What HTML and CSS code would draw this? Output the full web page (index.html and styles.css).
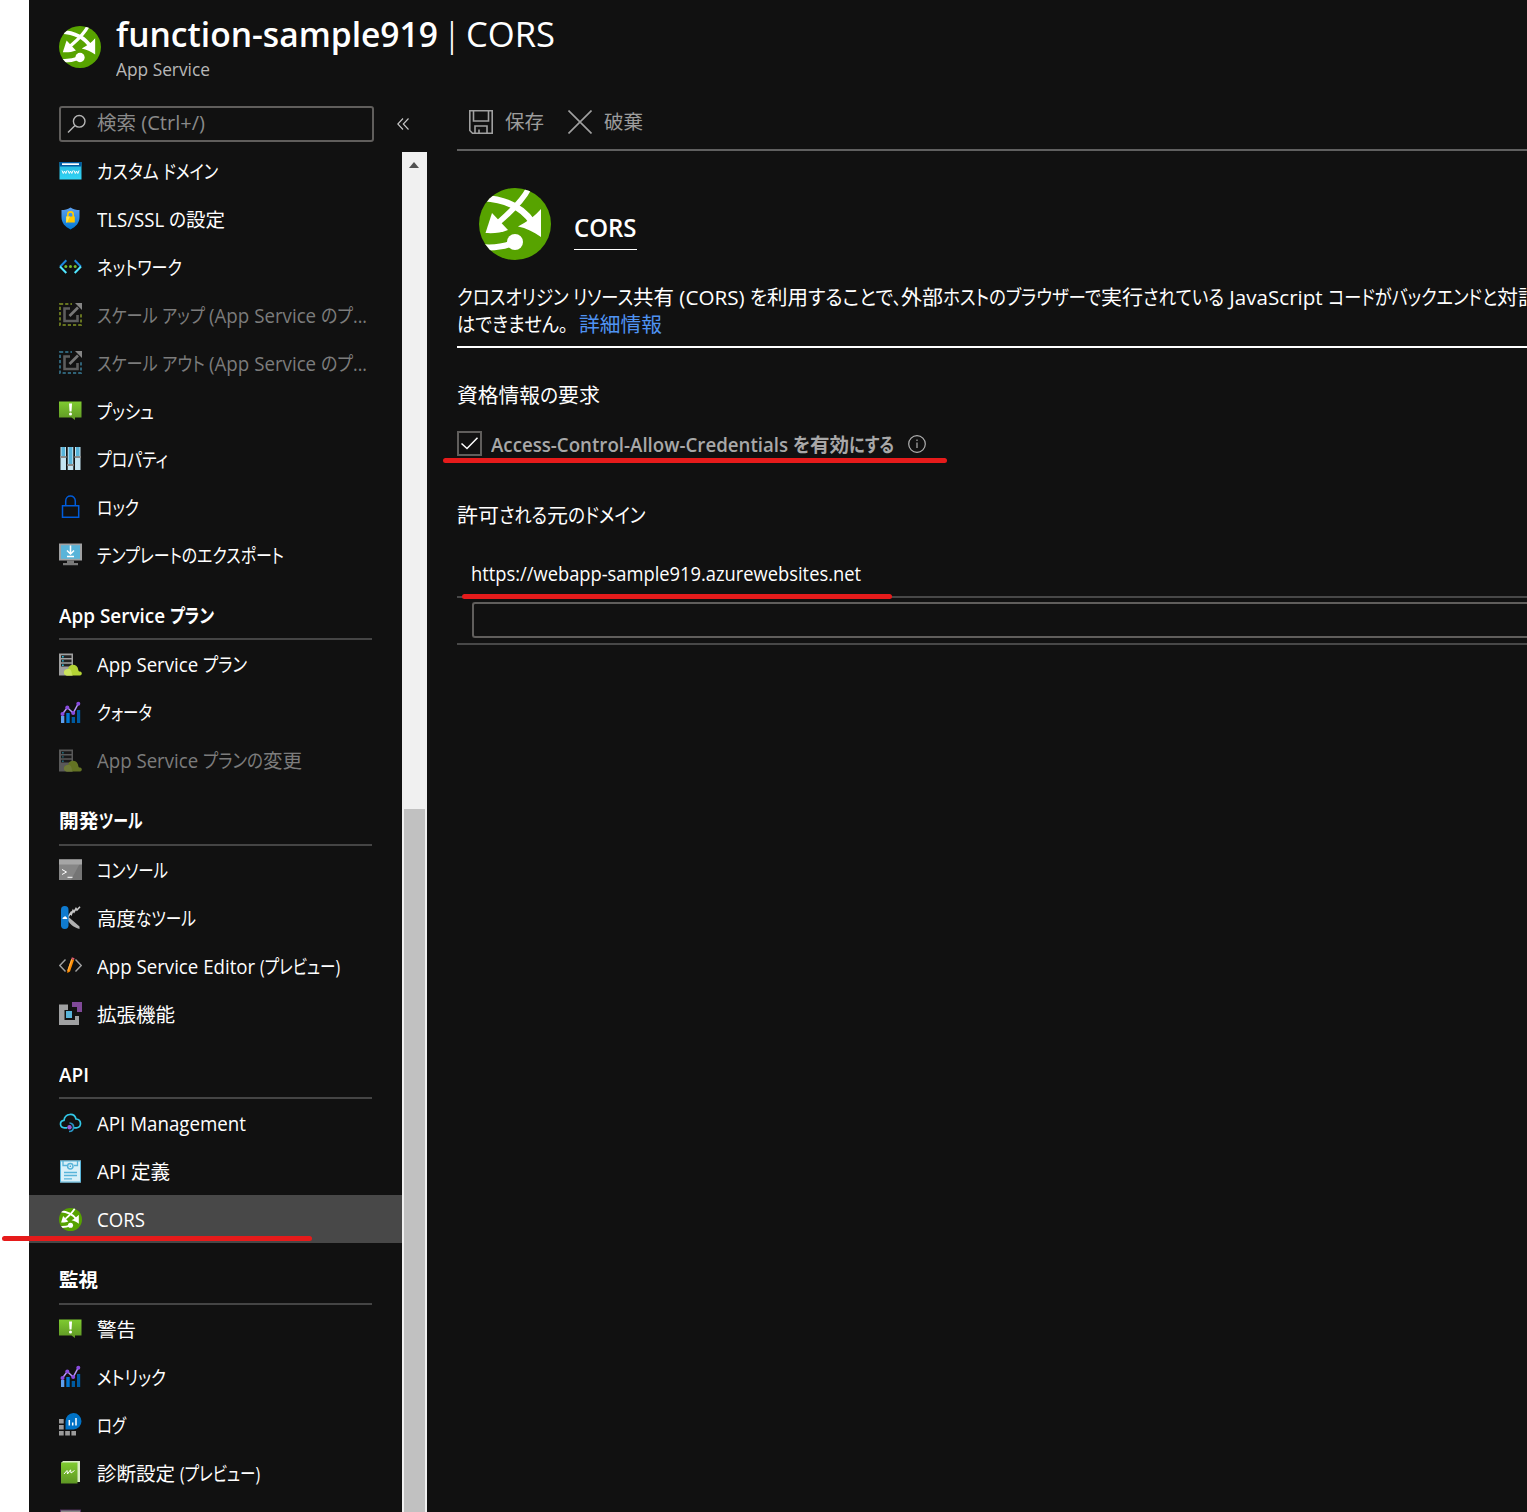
FILE: index.html
```
<!DOCTYPE html>
<html lang="ja">
<head>
<meta charset="utf-8">
<title>function-sample919 | CORS</title>
<link rel="stylesheet" href="styles.css">
</head>
<body>
<svg class="defs" width="0" height="0">
  <defs>
    <linearGradient id="g-green" x1="0" y1="0" x2="0" y2="1"><stop offset="0" stop-color="#7fcb30"/><stop offset="1" stop-color="#5e9624"/></linearGradient>
    <linearGradient id="g-shield" x1="0" y1="0" x2="0" y2="1"><stop offset="0" stop-color="#5ea0ef"/><stop offset="1" stop-color="#0078d4"/></linearGradient>
    <linearGradient id="g-cyan" x1="0" y1="0" x2="0" y2="1"><stop offset="0" stop-color="#26b5dc"/><stop offset="1" stop-color="#32d4f5"/></linearGradient>
    <clipPath id="c-round"><circle cx="36" cy="36" r="36"/></clipPath>
  </defs>
  <symbol id="i-cors" viewBox="0 0 72 72">
    <circle cx="36" cy="36" r="36" fill="#57a300"/>
    <g clip-path="url(#c-round)" fill="none" stroke="#fff">
      <path d="M50 0C44 12 34 22 20 34" stroke-width="5.5"/>
      <path d="M4 10C24 11 42 17 54 35" stroke-width="6.5"/>
      <path d="M2 59C12 60 24 59 34 55" stroke-width="6"/>
      <path d="M13 25L6.500 45C14 45.500 22 45 29 42Z" fill="#fff" stroke="none"/>
      <path d="M62 21L62 49C55 44 47 40 39 38.500C48 34 56 28 62 21Z" fill="#fff" stroke="none"/>
      <circle cx="36" cy="54" r="8" fill="#fff" stroke="none"/>
    </g>
  </symbol>
  <symbol id="i-alert" viewBox="0 0 23 23">
    <path d="M0 2.500H22.500V18.500H16V21L12.500 18.500H0Z" fill="url(#g-green)"/>
    <path d="M10 4.500H13L12.500 12.500H10.500Z" fill="#fff"/><circle cx="11.500" cy="15" r="1.500" fill="#fff"/>
  </symbol>
  <symbol id="i-chart" viewBox="0 0 23 23">
    <path d="M2 15H5.300V22H2Z" fill="#5ea0ef"/><path d="M7.300 12H10.700V22H7.300Z" fill="#0078d4"/><path d="M12.700 16H16V22H12.700Z" fill="#005ba1"/><path d="M18 9H21.200V22H18Z" fill="#005ba1"/>
    <path d="M3.500 13L8.300 6.500L14.200 12L19.300 2.700" fill="none" stroke="#b796f9" stroke-width="1.500"/>
    <g fill="#8a4be0"><circle cx="3.500" cy="13" r="2"/><circle cx="8.300" cy="6.500" r="2"/><circle cx="14.200" cy="12" r="2"/><circle cx="19.300" cy="2.700" r="2"/></g>
  </symbol>
  <symbol id="i-plan" viewBox="0 0 23 23">
    <path d="M0 0.500H14V22.500H0Z" fill="#a0a0a0"/>
    <path d="M2 2.300H12.500V5H2ZM2 6.500H12.500V9.200H2ZM2 10.800H12.500V13.500H2Z" fill="#222"/>
    <path d="M3 3H4.700V4.400H3ZM3 7.200H4.700V8.600H3ZM3 11.500H4.700V12.900H3Z" fill="#32bedd"/>
    <path d="M8 22.500C3.500 22 4 16 9 16C10 10.500 18.500 10 19.300 17C19.600 18.500 20 18.500 21 18.500C23.500 18.700 23.300 22.500 21 22.500Z" fill="#b4d335"/>
    <path d="M8 22.500C3.500 22 4 16 9 16C11 15.500 13 17 13 22.500Z" fill="#cbe35e"/>
  </symbol>
  <symbol id="i-scale" viewBox="0 0 23 23">
    <path d="M1 1H22V22H1Z" fill="none" stroke="currentColor" stroke-width="2" stroke-dasharray="3.200 2"/>
    <path d="M13 0H23V10H13Z" fill="#111"/>
    <path d="M11 5.500H5.500V18H18.500V12" fill="none" stroke="#5d5d5d" stroke-width="2.600"/>
    <path d="M10.500 13L19 4.500" stroke="#777" stroke-width="2.600"/><path d="M16 0H23V7Z" fill="#858585"/>
  </symbol>
</svg>

<div class="blade">
  <header class="head">
    <svg class="logo"><use href="#i-cors"/></svg>
    <div class="titles">
      <h1><b data-w="322">function-sample919</b><span data-w="28"> | </span><span data-w="89">CORS</span></h1>
      <p><span data-w="94">App Service</span></p>
    </div>
  </header>

  <div class="columns">
    <nav class="side">
      <div class="searchrow">
        <div class="search">
          <svg width="20" height="20" viewBox="0 0 20 20" fill="none" stroke="#b5b5b5" stroke-width="1.400"><circle cx="12.200" cy="7.300" r="5.800"/><path d="M8 11.500L1 18.500"/></svg>
          <span class="line"><span data-w="39">検索</span><span data-w="69"> (Ctrl+/)</span></span>
        </div>
        <svg class="fold" width="12" height="12" viewBox="0 0 12 12" fill="none" stroke="#c8c8c8" stroke-width="1.100"><path d="M6 .5L.8 6L6 11.500M11.500 .5L6.300 6L11.500 11.500"/></svg>
      </div>
      <div class="scroller">
        <div class="menu">
          <div class="item"><svg viewBox="0 0 23 23"><path d="M.5 3H22.500V20.500H.5Z" fill="url(#g-cyan)"/><path d="M.5 3H22.500V7.500H.5Z" fill="#005ba1"/><path d="M3 4.300H20V6H3Z" fill="#fff"/><path d="M3 11.500L4.300 14.500L5.500 12L6.800 14.500L8 11.500M9 11.500L10.300 14.500L11.500 12L12.800 14.500L14 11.500M15 11.500L16.300 14.500L17.500 12L18.800 14.500L20 11.500" fill="none" stroke="#fff" stroke-width="1"/></svg><span class="line"><span data-w="66">カスタム </span><span data-w="55">ドメイン</span></span></div>
          <div class="item"><svg viewBox="0 0 23 23"><path d="M11.500 .5C14.500 2.500 17.500 3 20.500 3V10C20.500 16 17 19.500 11.500 22.500C6 19.500 2.500 16 2.500 10V3C5.500 3 8.500 2.500 11.500 .5Z" fill="url(#g-shield)"/><path d="M8.800 10V7.500C8.800 4 14.200 4 14.200 7.500V10" fill="none" stroke="#ffca00" stroke-width="1.600"/><path d="M7.200 9.500H15.800V15.500H7.200Z" fill="#ffca00"/><path d="M7.200 9.500H11L8 15.500H7.200Z" fill="#ffe452"/></svg><span class="line"><span data-w="72">TLS/SSL </span><span data-w="17">の</span><span data-w="39">設定</span></span></div>
          <div class="item"><svg viewBox="0 0 23 23" fill="none" stroke-width="2"><path d="M7.300 5.200L1 11.700M15.700 5.200L22 11.700" stroke="#1b86de"/><path d="M1 11.500L7.300 18M22 11.500L15.700 18" stroke="#50e6ff"/><g fill="#76bc2d" stroke="none"><circle cx="6.800" cy="11.500" r="1.500"/><circle cx="11.500" cy="11.500" r="1.500"/><circle cx="16.200" cy="11.500" r="1.500"/></g></svg><span class="line"><span data-w="85">ネットワーク</span></span></div>
          <div class="item off olive"><svg><use href="#i-scale"/></svg><span class="line"><span data-w="65">スケール </span><span data-w="47">アップ </span><span data-w="112">(App Service </span><span data-w="32">のプ</span><span data-w="14">...</span></span></div>
          <div class="item off steel"><svg><use href="#i-scale"/></svg><span class="line"><span data-w="65">スケール </span><span data-w="47">アウト </span><span data-w="112">(App Service </span><span data-w="32">のプ</span><span data-w="14">...</span></span></div>
          <div class="item"><svg><use href="#i-alert"/></svg><span class="line"><span data-w="57">プッシュ</span></span></div>
          <div class="item"><svg viewBox="0 0 23 23"><path d="M1.500 0H7V23H1.500ZM8.700 0H14.300V23H8.700ZM16 0H21.500V23H16Z" fill="#c3e3f1"/><path d="M2.500 0H6V9H2.500ZM9.700 0H13.300V17H9.700ZM17 0H20.500V9H17Z" fill="#59b4d9"/><path d="M1 9H7.500V11H1ZM8.200 17H14.800V19H8.200ZM15.500 9H22V11H15.500Z" fill="#8c8c8c"/></svg><span class="line"><span data-w="71">プロパティ</span></span></div>
          <div class="item"><svg viewBox="0 0 23 23" fill="none" stroke="#015cda" stroke-width="1.500"><path d="M3.500 10.700H19.700V22.200H3.500ZM6.700 10.500V6C6.700 -.8 16.300 -.8 16.300 6V10.500"/></svg><span class="line"><span data-w="42">ロック</span></span></div>
          <div class="item"><svg viewBox="0 0 23 23"><path d="M0 .5H23V17.500H0Z" fill="#a0a1a2"/><path d="M2 2.200H21V15.800H2Z" fill="#59b4d9"/><path d="M8 17.500H15V20H19V22.300H4V20H8Z" fill="#7a7a7a"/><path d="M11.500 2.500V10.500M8 7.500L11.500 11L15 7.500M8 13.500H15" fill="none" stroke="#fff" stroke-width="1.500"/></svg><span class="line"><span data-w="187">テンプレートのエクスポート</span></span></div>

          <h2 class="line"><span data-w="111">App Service </span><span data-w="44">プラン</span></h2>
          <div class="item"><svg><use href="#i-plan"/></svg><span class="line"><span data-w="106">App Service </span><span data-w="44">プラン</span></span></div>
          <div class="item"><svg><use href="#i-chart"/></svg><span class="line"><span data-w="55">クォータ</span></span></div>
          <div class="item off dim"><svg><use href="#i-plan"/></svg><span class="line"><span data-w="106">App Service </span><span data-w="60">プランの</span><span data-w="39">変更</span></span></div>

          <h2 class="line"><span data-w="39.500">開発</span><span data-w="43.500">ツール</span></h2>
          <div class="item"><svg viewBox="0 0 23 23"><path d="M0 1.500H23V22H0Z" fill="#757575"/><path d="M0 1.500H23L12 22H0Z" fill="#868686"/><path d="M0 1.500H23V6.500H0Z" fill="#a6a6a6"/><path d="M3 11.500L7.500 14L3 16.500M8.500 19.300H13.500" fill="none" stroke="#fff" stroke-width="1"/></svg><span class="line"><span data-w="71">コンソール</span></span></div>
          <div class="item"><svg viewBox="0 0 23 23"><path d="M9 10.500L20.500 20.500V23C14 21.500 10 17 8 13Z" fill="#b0b0b0"/><path d="M9 11L12 6.500L12.500 8L14 4.500L15 6L17 2.500L18 4L21 .8" fill="none" stroke="#c8c8c8" stroke-width="1.600"/><rect x="2" y="0" width="7.500" height="23" rx="3.700" fill="#0f7bd0"/><path d="M3.500 13C3.500 11.500 4.500 11.300 5 11C5.500 9.800 7 10 7.200 11.300C8.500 11.500 8.500 13 8 13Z" fill="#fff"/></svg><span class="line"><span data-w="39">高度</span><span data-w="60">なツール</span></span></div>
          <div class="item"><svg viewBox="0 0 23 23"><path d="M6.500 5.500L.8 11.500L6.500 17.500M16.500 5.500L22.200 11.500L16.500 17.500" fill="none" stroke="#a0a1a2" stroke-width="1.400"/><path d="M12.300 5L15 6L11 17.500L8.300 19L8.300 16.500Z" fill="#ff8c00"/><path d="M12.300 5L13.300 5.400L9.300 17L8.300 16.500Z" fill="#ffb24a"/><path d="M12.900 3.300L15.600 4.300L15 6L12.300 5Z" fill="#dd5b6b"/></svg><span class="line"><span data-w="163">App Service Editor </span><span data-w="80">(プレビュー)</span></span></div>
          <div class="item"><svg viewBox="0 0 23 23"><path d="M0 2.500H9V8H5.500V18H16V14H20V23H0Z" fill="#a0a1a2"/><path d="M13 0H23V10H18V5H13Z" fill="#804998"/><path d="M7 9H13V16H7Z" fill="#59b4d9"/></svg><span class="line"><span data-w="78">拡張機能</span></span></div>

          <h2 class="line"><span data-w="30">API</span></h2>
          <div class="item"><svg viewBox="0 0 23 23" fill="none" stroke-width="1.700"><path d="M8 15.800H5.500C.5 15.500 0 9 5 8.300C6 1 15.500 .5 17 7C22.800 7.500 23 15.300 17.500 15.800H14.500" stroke="#32c8e8"/><path d="M10.500 11C16 11 16 19.500 10 19.500" stroke="#2a94c4"/><circle cx="10.500" cy="15.300" r="2.200" fill="#9a5cd8"/></svg><span class="line"><span data-w="149">API Management</span></span></div>
          <div class="item"><svg viewBox="0 0 23 23"><path d="M1 .5H22V22.500H1Z" fill="#d9f0f8"/><path d="M1.500 1H21.500V22H1.500Z" fill="none" stroke="#59b4d9" stroke-width="1"/><path d="M4 1V5.500H8M18.500 1V5.500H15M5 12.500H18M5 15.500H18M5 18.800H13" fill="none" stroke="#59b4d9" stroke-width="1.300"/><circle cx="11.300" cy="6.300" r="2.700" fill="none" stroke="#59b4d9" stroke-width="1.500"/><circle cx="11.300" cy="6.300" r=".8" fill="#3999c6"/></svg><span class="line"><span data-w="34">API </span><span data-w="39">定義</span></span></div>
          <div class="item active"><svg><use href="#i-cors"/></svg><span class="line"><span data-w="48">CORS</span></span></div>

          <h2 class="line"><span data-w="39">監視</span></h2>
          <div class="item"><svg><use href="#i-alert"/></svg><span class="line"><span data-w="39">警告</span></span></div>
          <div class="item"><svg><use href="#i-chart"/></svg><span class="line"><span data-w="69">メトリック</span></span></div>
          <div class="item"><svg viewBox="0 0 23 23"><path d="M0 6H4.700V10.500H0ZM0 12H4.700V16.500H0ZM0 18H4.700V22.500H0ZM6.200 18H10.900V22.500H6.200ZM12.400 18H17V22.500H12.400Z" fill="#9b9b9b"/><path d="M6.500 16.500V8.500A8 8.200 0 1 1 14.500 16.500Z" fill="#0072c6"/><path d="M10.300 7V12.500M13.700 9.500V12.500M17 5V12.500" stroke="#fff" stroke-width="1.500"/></svg><span class="line"><span data-w="29">ログ</span></span></div>
          <div class="item"><svg viewBox="0 0 23 23"><path d="M4 0H21V21H18V2H2Z" fill="#d8ecc4"/><path d="M2 2.500C2 1.800 2.500 1.500 3 1.500H18.500V22.500H2Z" fill="url(#g-green)"/><path d="M5 13L8 9.500L8.500 13L11.500 8.800L12 12L15.500 9.500" fill="none" stroke="#fff" stroke-width="1"/></svg><span class="line"><span data-w="78">診断設定</span><span data-w="5"> </span><span data-w="80">(プレビュー)</span></span></div>
          <div class="item"><svg viewBox="0 0 23 23"><path d="M1 .5H22V22.500H1Z" fill="#50335f"/><path d="M2 1.500H21V21H2Z" fill="#8a8a8a"/></svg></div>
        </div>
        <div class="bar"><i class="up"></i><i class="thumb"></i></div>
      </div>
    </nav>

    <main>
      <div class="tools">
        <svg width="24" height="24" viewBox="0 0 24 24" fill="none" stroke="#a0a0a0" stroke-width="1.600"><path d="M.8 .8H23.200V23.200H3.500L.8 20.500ZM4.500 1V11H19.500V1M6 23V16H18V23M10 23V19.500"/></svg>
        <span class="line"><span data-w="39">保存</span></span>
        <svg class="x" width="24" height="24" viewBox="0 0 24 24" stroke="#a0a0a0" stroke-width="1.600"><path d="M.5 .5L23.500 23.500M23.500 .5L.5 23.500"/></svg>
        <span class="line"><span data-w="39">破棄</span></span>
      </div>
      <div class="intro">
        <svg class="big"><use href="#i-cors"/></svg>
        <h3 class="line"><span data-w="62.500">CORS</span></h3>
      </div>
      <div class="text">
        <div class="line"><span data-w="116">クロスオリジン </span><span data-w="60">リソース</span><span data-w="41">共有</span><span data-w="76"> (CORS) </span><span data-w="17">を</span><span data-w="41">利用</span><span data-w="85">することで</span><span class="stop" data-w="8">、</span><span data-w="42">外部</span><span data-w="158">ホストのブラウザーで</span><span data-w="42">実行</span><span data-w="81">されている</span><span data-w="104"> JavaScript </span><span data-w="169">コードがバックエンドと</span><span data-w="42">対話</span></div>
        <div class="line"><span class="stop" data-w="111">はできません。</span><a data-w="83">詳細情報</a></div>
      </div>
      <h4 class="line cred"><span data-w="83">資格情報</span><span data-w="18">の</span><span data-w="42">要求</span></h4>
      <div class="check">
        <span class="box"><svg width="19" height="15" viewBox="0 0 19 15" fill="none" stroke="#fff" stroke-width="1.500"><path d="M1.500 7.500L7 12.500L17.500 1.800"/></svg></span>
        <span class="line"><span data-w="302">Access-Control-Allow-Credentials </span><span data-w="17">を</span><span data-w="39">有効</span><span data-w="45">にする</span></span>
        <svg class="info" width="18" height="18" viewBox="0 0 18 18" fill="none" stroke="#b0b0b0" stroke-width="1.200"><circle cx="9" cy="9" r="8.300"/><path d="M9 7.500V13M9 4.500V6"/></svg>
      </div>
      <h4 class="line origins"><span data-w="42">許可</span><span data-w="48">される</span><span data-w="21">元</span><span data-w="77.500">のドメイン</span></h4>
      <div class="row"><span class="line"><span data-w="390">https://webapp-sample919.azurewebsites.net</span></span></div>
      <div class="row entry"><div class="input"></div></div>
    </main>
  </div>
</div>
<i class="mark m1"></i><i class="mark m2"></i><i class="mark m3"></i>
<script src="fit.js"></script>
</body>
</html>
```
FILE: styles.css
```
* { box-sizing: border-box; }
body {
  margin: 0; padding-left: 29px; height: 1512px; overflow: hidden; position: relative;
  background: #fff; color: #fff;
  font: 19.5px/28px "Open Sans", "Noto Sans CJK JP", sans-serif;
}
.defs { position: absolute; }
svg { display: block; flex: none; }
h1, h2, h3, h4, p { margin: 0; font-weight: 400; }
[data-w] { display: inline-block; flex: none; white-space: pre; transform-origin: 0 50%; font-feature-settings: "palt"; }
.line { display: flex; white-space: nowrap; align-items: baseline; }

.blade { height: 1512px; background: #111; display: flex; flex-direction: column; overflow: hidden; }
.head { height: 106px; flex: none; display: flex; padding: 11px 0 0 30px; gap: 15px; }
.logo { width: 42px; height: 42px; margin-top: 15px; }
.titles h1 { display: flex; font-size: 35px; line-height: 46px; }
.titles b { font-weight: 600; }
.titles p { display: flex; font-size: 17.500px; line-height: 24px; color: #b8b8b8; }

.columns { flex: 1; display: flex; min-height: 0; }
.side { width: 398px; flex: none; display: flex; flex-direction: column; }
.searchrow { height: 46px; flex: none; display: flex; padding-left: 30px; }
.search { width: 315px; height: 36px; border: 2px solid #605e5c; border-radius: 3px; display: flex; align-items: center; padding-left: 6px; gap: 9.500px; color: #8a8a8a; }
.search .line { margin-top: -2px; }
.fold { margin: 12px 0 0 23px; }
.scroller { flex: 1; min-height: 0; display: flex; overflow: hidden; }
.menu { flex: 1; margin-top: -5.400px; }
.item { height: 48px; padding-left: 30px; display: flex; align-items: center; gap: 14.500px; }
.item svg { width: 23px; height: 23px; }
.item .line { padding-top: 2px; }
.off { color: #7c7c7c; }
.olive svg { color: #66741f; }
.steel svg { color: #2f6277; }
.dim svg { opacity: .5; }
.active { background: #484848; }
h2 { height: 61.500px; margin: 0 30px; padding-top: 23px; font-size: 19.500px; font-weight: 600; border-bottom: 2px solid #454545; }
.bar { width: 25px; flex: none; background: #f0f0f0; display: flex; flex-direction: column; align-items: center; }
.up { border: 5.500px solid transparent; border-top: 0; border-bottom: 6px solid #505050; margin: 10px 1px 0 0; }
.thumb { width: 21px; flex: 1; margin: 641px 2px 0; background: #c1c1c1; }

main { flex: 1; min-width: 0; padding-left: 30px; overflow: hidden; font-size: 20.700px; }
.tools { height: 45px; border-bottom: 2px solid #606060; display: flex; padding: 4px 0 0 12px; color: #9c9c9c; font-size: 19.500px; }
.tools .line { margin: -2px 0 0 12px; }
.tools .x { margin-left: 24px; }
.intro { height: 133px; display: flex; padding: 37px 0 0 22px; gap: 23px; }
.big { width: 72px; height: 72px; }
h3 { height: 38px; margin-top: 24px; font-size: 25px; line-height: 30px; font-weight: 600; border-bottom: 1px solid #fff; }
.text { height: 64px; border-bottom: 2px solid #fff; }
.text .line { line-height: 27px; height: 27px; }
.text a { color: #4f93f3; margin-left: 11px; }
.cred { margin-top: 33px; }
.check { height: 25px; margin-top: 22px; display: flex; align-items: center; font-size: 19.500px; font-weight: 600; color: #a8a8a8; }
.check .line { padding-top: 2px; }
.box { width: 25px; height: 25px; border: 2px solid #605e5c; display: grid; place-items: center; margin-right: 9px; }
.info { margin: 1px 0 0 14px; }
.origins { margin-top: 45px; }
.row { height: 69px; padding: 31px 0 0 14px; font-size: 19.500px; border-bottom: 2px solid #484848; }
.entry { height: 47px; padding: 4px 0 0 15px; }
.input { height: 36px; border: 2px solid #605e5c; border-right: 0; border-radius: 3px 0 0 3px; }

.mark { position: absolute; height: 5px; border-radius: 3px; background: #e61b1b; }
.m1 { left: 443px; top: 458px; width: 504px; }
.m2 { left: 462px; top: 594px; width: 430px; }
.m3 { left: 2px; top: 1236px; width: 310px; }
```
FILE: fit.js
```
document.querySelectorAll('[data-w]').forEach(function (el) {
  var want = parseFloat(el.dataset.w);
  var natural = el.getBoundingClientRect().width;
  el.style.transform = 'scaleX(' + want / natural + ')';
  el.style.marginRight = (want - natural) + 'px';
});
```
